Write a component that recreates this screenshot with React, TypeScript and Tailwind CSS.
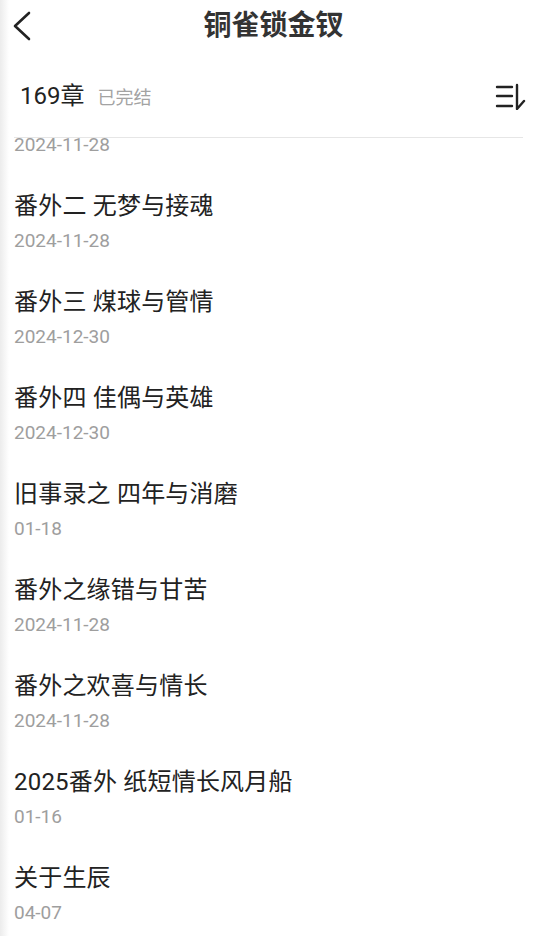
type Chapter = {
  title: string;
  date: string;
};

const chapters: Chapter[] = [
  { title: "番外二 无梦与接魂", date: "2024-11-28" },
  { title: "番外三 煤球与管情", date: "2024-12-30" },
  { title: "番外四 佳偶与英雄", date: "2024-12-30" },
  { title: "旧事录之 四年与消磨", date: "01-18" },
  { title: "番外之缘错与甘苦", date: "2024-11-28" },
  { title: "番外之欢喜与情长", date: "2024-11-28" },
  { title: "2025番外 纸短情长风月船", date: "01-16" },
  { title: "关于生辰", date: "04-07" },
];

const font = { fontFamily: '"Roboto", "Noto Sans CJK SC", sans-serif' };

function BackIcon() {
  return (
    <svg width="24" height="32" viewBox="0 0 24 32" fill="none" stroke="#222" strokeWidth="2.6" strokeLinecap="round" strokeLinejoin="round">
      <path d="M18 3 L4 16 L18 29" />
    </svg>
  );
}

function SortIcon() {
  return (
    <svg width="32" height="28" viewBox="0 0 32 28" fill="none" stroke="#222" strokeWidth="2.4" strokeLinecap="round" strokeLinejoin="round">
      {/* three bars */}
      <line x1="2" y1="5" x2="17" y2="5" />
      <line x1="2" y1="14" x2="17" y2="14" />
      <line x1="2" y1="24" x2="17" y2="24" />
      {/* down stroke with hook */}
      <path d="M22 3 V27 L29 19" />
    </svg>
  );
}

export default function App() {
  return (
    <div className="relative w-[547px] h-[936px] bg-white overflow-hidden" style={font}>
      {/* left edge shade */}
      <div className="absolute left-0 top-0 bottom-0 w-[9px] bg-gradient-to-r from-[#ececec] to-white z-10" />

      {/* Header */}
      <div className="relative h-[52px] flex items-center justify-center">
        <div className="absolute left-[11px] top-[10px]">
          <BackIcon />
        </div>
        <h1 className="text-[28px] font-bold text-[#333] leading-none">铜雀锁金钗</h1>
      </div>

      {/* Info row */}
      <div className="h-[85px] flex items-center justify-between pl-[20px] pr-[20px] pt-[2px]">
        <div className="flex items-baseline gap-[13px]">
          <span className="text-[24px] text-[#222]">169章</span>
          <span className="text-[18px] text-[#a3a3a3]">已完结</span>
        </div>
        <SortIcon />
      </div>
      <div className="ml-[14px] mr-[24px] h-px bg-[#e6e6e6]" />

      {/* Chapter list, scrolled so only the first date peeks out */}
      <div className="overflow-hidden h-[798px]">
        <div className="pl-[14px] -mt-[5px] h-[39px]">
          <div className="text-[19px] leading-[24px] text-[#9e9e9e]">2024-11-28</div>
        </div>
        {chapters.map((c) => (
          <div key={c.title} className="h-[96px] pl-[14px] pt-[18px]">
            <div className="text-[24px] leading-[32px] text-[#222] tracking-[0.2px]">{c.title}</div>
            <div className="mt-[7px] text-[19px] leading-[24px] text-[#9e9e9e]">{c.date}</div>
          </div>
        ))}
      </div>
    </div>
  );
}
